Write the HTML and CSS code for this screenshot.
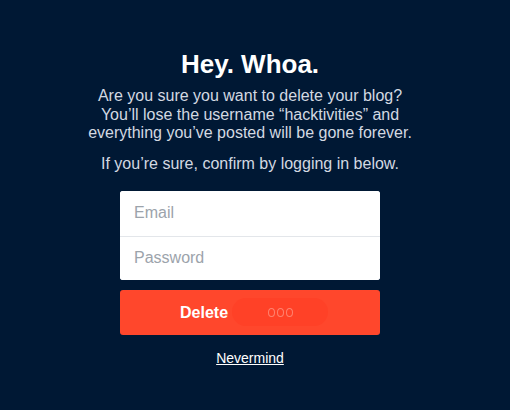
FILE: index.html
```html
<!DOCTYPE html>
<html lang="en">
<head>
  <meta charset="UTF-8" />
  <title>Delete blog</title>
  <link rel="stylesheet" href="styles.css">
</head>
<body>
  <div class="container">
    <h2>Hey. Whoa.</h2>
    <p class="warning">Are you sure you want to delete your blog?<br>You’ll lose the username “hacktivities” and<br>everything you’ve posted will be gone forever.</p>
    <p class="hint">If you’re sure, confirm by logging in below.</p>

    <form class="login-form">
      <div class="fields">
        <input type="email" placeholder="Email">
        <input type="password" placeholder="Password">
      </div>
      <button type="button" class="delete-btn">
        Delete
        <span class="spinner"><i></i><i></i><i></i></span>
      </button>
    </form>

    <a href="#" class="nevermind">Nevermind</a>
  </div>
</body>
</html>
```

FILE: styles.css
```css
body {
  font-family: "Liberation Sans", Arial, sans-serif;
  background: #001834;
  margin: 0;
  padding: 0 10px 0 0;
}

.container {
  width: 500px;
  display: flex;
  flex-direction: column;
  align-items: center;
  padding-top: 48px;
}

h2 {
  color: #fff;
  font-size: 26px;
  font-weight: bold;
  margin: 0 0 7px;
  line-height: 32px;
}

.warning, .hint {
  color: #d3d9e2;
  font-size: 16px;
  line-height: 18.5px;
  text-align: center;
  margin: 0;
}

.hint {
  margin-top: 12px;
}

.login-form {
  width: 260px;
  margin-top: 18px;
}

.fields {
  background: #fff;
  border-radius: 3px;
  overflow: hidden;
}

.fields input {
  display: block;
  width: 100%;
  box-sizing: border-box;
  height: 44.5px;
  border: none;
  padding: 0 14px;
  font-family: inherit;
  font-size: 16px;
  color: #333;
  background: #fff;
  outline: none;
}

.fields input + input {
  border-top: 1px solid #e3e6ea;
}

.fields input::placeholder {
  color: #9ca3ab;
}

.delete-btn {
  position: relative;
  display: block;
  width: 100%;
  height: 45px;
  margin-top: 10px;
  border: none;
  border-radius: 3px;
  background: #ff472c;
  color: #fff;
  font-family: inherit;
  font-size: 16px;
  font-weight: bold;
  text-align: left;
  padding: 0 0 0 60px;
  cursor: pointer;
}

/* faint loading pill next to the label */
.spinner {
  position: absolute;
  left: 112px;
  top: 8px;
  width: 96px;
  height: 28px;
  border-radius: 14px;
  background: #ff4127;
  display: flex;
  justify-content: center;
  align-items: center;
  gap: 2px;
}

.spinner i {
  width: 5px;
  height: 7px;
  border-radius: 50%;
  border: 1px solid rgba(255, 210, 200, 0.45);
}

.nevermind {
  margin-top: 15px;
  color: #fff;
  font-size: 14px;
  text-decoration: underline;
}
```
